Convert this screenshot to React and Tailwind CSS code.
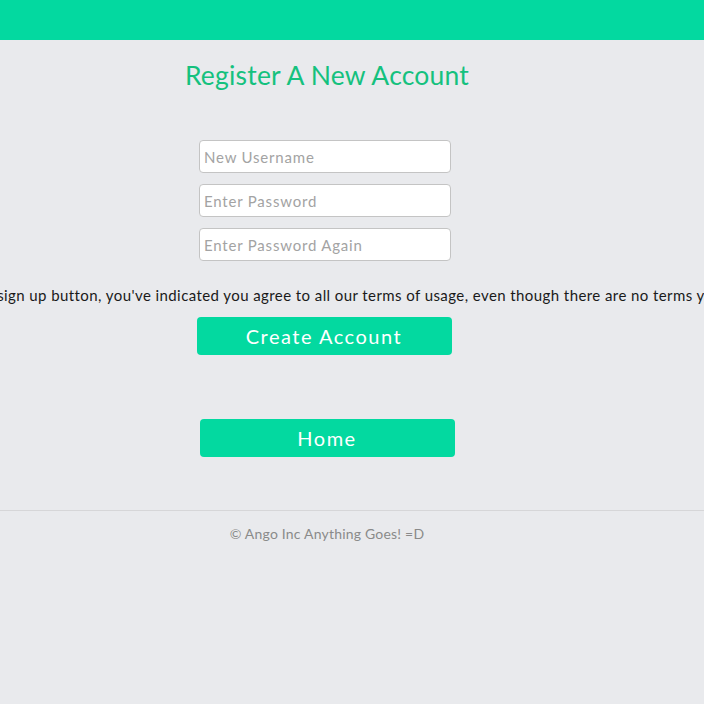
export default function App() {
  const font = { fontFamily: "Lato, 'Open Sans', sans-serif" };
  const inputCls =
    "h-[33px] w-full rounded-[4px] border border-[#c4c4c4] bg-white px-[4px] text-[15px] tracking-[0.8px] placeholder:text-[#a3a3a3] outline-none";
  return (
    <div className="min-h-[704px] w-full overflow-hidden bg-[#e9eaed]" style={font}>
      <div className="h-10 bg-[#03d9a0]" />
      <div className="w-[654px] flex flex-col items-center">
        <h1 className="mt-[19px] text-[26.5px] leading-[32px] text-[#15c17e] tracking-[0.2px]">Register A New Account</h1>
        <div className="mt-[49px] flex flex-col gap-[11px] w-[252px] ml-[-4px]">
          <input className={inputCls} placeholder="New Username" />
          <input type="password" className={inputCls} placeholder="Enter Password" />
          <input type="password" className={inputCls} placeholder="Enter Password Again" />
        </div>
        <div className="mt-[25px] w-full flex justify-center whitespace-nowrap">
          <p className="mr-[40px] text-[15px] leading-[18px] tracking-[0.42px] text-[#1a1a1a]">By clicking the sign up button, you've indicated you agree to all our terms of usage, even though there are no terms yet.</p>
        </div>
        <button className="mt-[13px] h-[38px] w-[255px] ml-[-6px] rounded-[4px] bg-[#03d9a0] text-[20px] tracking-[1.5px] text-white">Create Account</button>
        <button className="mt-[64px] h-[38px] w-[255px] ml-[0px] rounded-[4px] bg-[#03d9a0] text-[20px] tracking-[1.5px] text-white">Home</button>
      </div>
      <div className="mt-[53px] border-t border-[#d6d6d8] w-full" />
      <div className="w-[654px] flex justify-center mt-[12px]">
        <p className="text-[14px] tracking-[0.2px] text-[#8a8a8a]">© Ango Inc Anything Goes! =D</p>
      </div>
    </div>
  );
}
